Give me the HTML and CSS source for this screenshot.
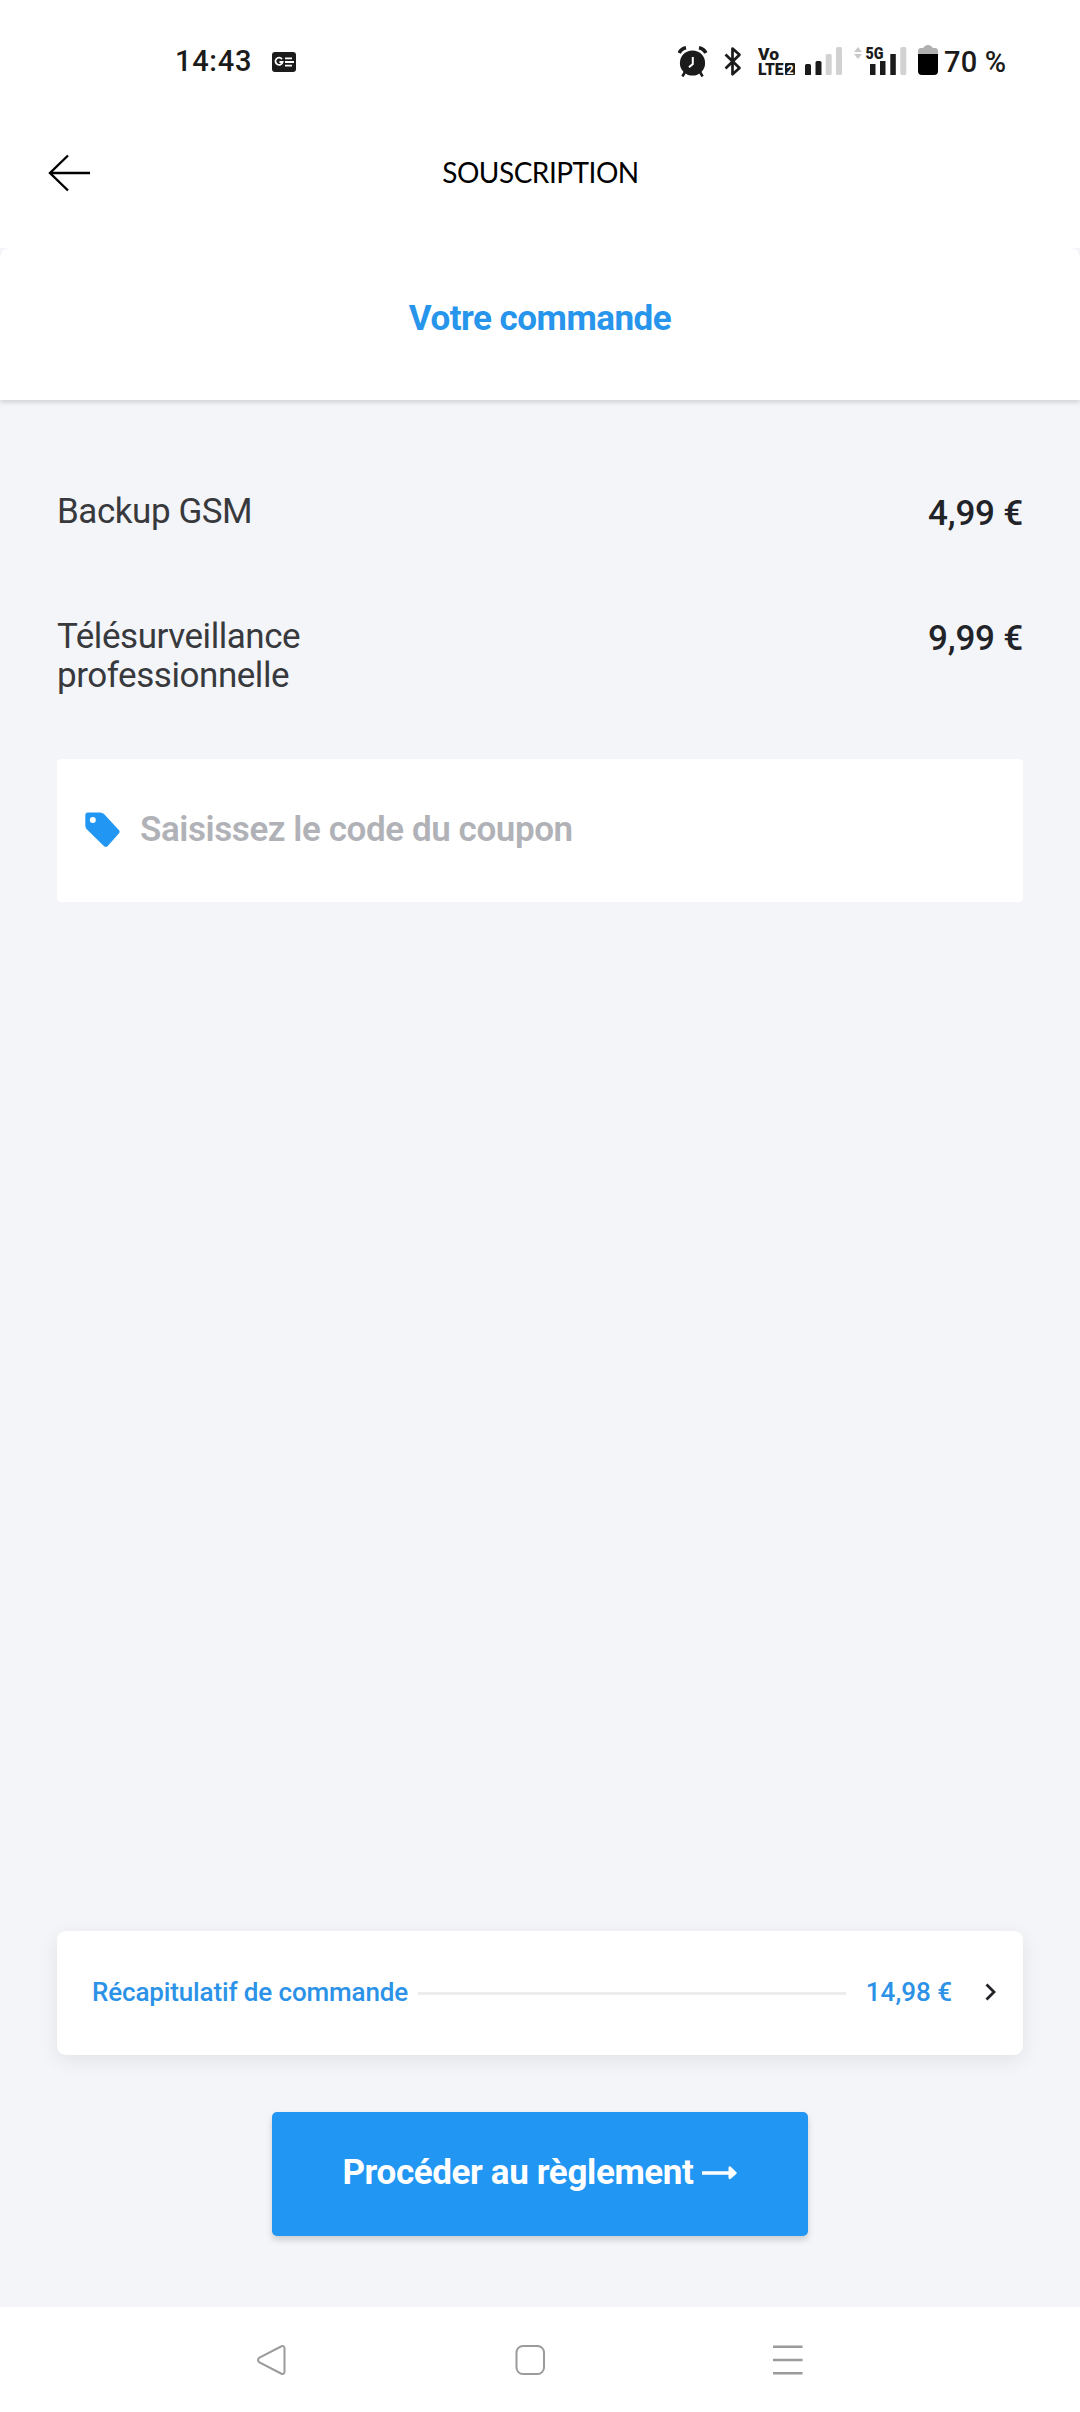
FILE: index.html
```html
<!DOCTYPE html>
<html lang="fr">
<head>
<meta charset="utf-8">
<title>Souscription</title>
<link rel="stylesheet" href="styles.css">
</head>
<body>
<div class="status-bar">
  <span class="clock">14:43</span>
  <svg class="news" width="24" height="20" viewBox="0 0 24 20">
    <rect width="24" height="20" rx="3" fill="#1b1b1b"/>
    <path d="M10 7.2A3.6 3.6 0 1 0 10.6 10H7.4M13 6.3h7M13 10h9M13 13.7h7" fill="none" stroke="#fff" stroke-width="1.8"/>
  </svg>
  <div class="indicators">
    <svg class="alarm" width="30" height="31" viewBox="0 0 30 31">
      <circle cx="14.500" cy="17" r="12.6" fill="#1b1b1b"/>
      <path d="M1.200 7Q3 2.800 8 1.700M27.800 7Q26 2.800 21 1.700" fill="none" stroke="#1b1b1b" stroke-width="3.6"/>
      <path d="M7 26l-2.6 4.5M22 26l2.6 4.5" stroke="#1b1b1b" stroke-width="2.6"/>
      <path d="M14.800 11v7l-3.8 3.3" fill="none" stroke="#fff" stroke-width="2"/>
    </svg>
    <svg class="bluetooth" width="18" height="31" viewBox="0 0 18 31">
      <path d="M1.500 8.500l14 13.500-7 6.200V2.500l7 6.200L1.500 22.500" fill="none" stroke="#1b1b1b" stroke-width="2.700" stroke-linejoin="round"/>
    </svg>
    <svg class="volte" width="38" height="40" viewBox="0 -6 38 40">
      <g class="tiny"><text x="0" y="13.500" font-size="16" textLength="21" lengthAdjust="spacingAndGlyphs">Vo</text>
      <text x="0" y="29" font-size="16" textLength="25.5" lengthAdjust="spacingAndGlyphs">LTE</text></g>
      <rect x="27" y="17" width="10" height="12" rx="1" fill="#1b1b1b"/>
      <text class="sim" x="28.500" y="27.500" font-size="12.500">2</text>
    </svg>
    <svg class="signal" width="38" height="30" viewBox="0 0 38 30">
      <path d="M0 19.5q0-1.5 1.5-1.5h3q1.5 0 1.5 1.5V29H0zM10.500 16.500q0-1.500 1.500-1.500h3q1.500 0 1.500 1.500V29h-6z" fill="#1b1b1b"/>
      <rect x="20.700" y="8" width="6" height="21" rx="1.500" fill="#d2d2d2"/>
      <rect x="31" y="1" width="6" height="28" rx="1.500" fill="#d2d2d2"/>
    </svg>
    <svg class="signal5g" width="54" height="40" viewBox="0 -6 54 40">
      <path d="M0 6l4-5 4 5zM0 8l4 5 4-5z" fill="#c9c9c9"/>
      <text class="tiny" x="11.500" y="12.500" font-size="16.500" textLength="18" lengthAdjust="spacingAndGlyphs">5G</text>
      <path d="M16 18h5.500v11H16zM26 15h5.500v14H26zM36.300 8h5.500v21h-5.500z" fill="#1b1b1b"/>
      <rect x="46.300" y="1" width="6" height="28" rx="1.500" fill="#d2d2d2"/>
    </svg>
    <svg class="battery" width="20" height="31" viewBox="0 0 20 31">
      <path d="M0 10V6q0-3 3-3h2l2-2q1-1 3-1t3 1l2 2h2q3 0 3 3v4z" fill="#b0b0b0"/>
      <path d="M0 9h20v17q0 4-4 4H4q-4 0-4-4z" fill="#000"/>
    </svg>
    <span class="percent">70 %</span>
  </div>
</div>
<header class="app-bar">
  <svg class="back" width="44" height="38" viewBox="0 0 44 38">
    <path d="M20 1.500L2 19l18 17.500M2 19h40" fill="none" stroke="#000" stroke-width="2.400"/>
  </svg>
  <h1 class="title">SOUSCRIPTION</h1>
</header>
<main class="content">
  <section class="panel"><h2 class="panel-title">Votre commande</h2></section>
  <ul class="items">
    <li class="item"><span class="name">Backup GSM</span><span class="price">4,99 €</span></li>
    <li class="item"><span class="name">Télésurveillance professionnelle</span><span class="price">9,99 €</span></li>
  </ul>
  <div class="coupon">
    <svg width="35" height="36" viewBox="0 0 35 36">
      <path d="M3 .5h12q2.200 0 4 1.600l14.800 16q1.600 1.700 0 3.500L22.500 34.300q-1.700 1.500-3.400 0L2 17.500Q.300 15.800.300 13.500V3.500Q.300.500 3 .500z" fill="#2196f3"/>
      <circle cx="7.800" cy="8" r="3" fill="#fff"/>
    </svg>
    <span class="coupon-text">Saisissez le code du coupon</span>
  </div>
  <footer class="bottom">
    <div class="summary">
      <span class="summary-label">Récapitulatif de commande</span>
      <span class="rule"></span>
      <span class="total">14,98 €</span>
      <svg class="chevron" width="12" height="18" viewBox="0 0 12 18"><path d="M1.500 1.500L9 9l-7.500 7.500" fill="none" stroke="#222328" stroke-width="2.800"/></svg>
    </div>
    <div class="pay">
      <span class="pay-label">Procéder au règlement</span>
      <svg width="36" height="14" viewBox="0 0 36 14"><path d="M0 5.200h26.500V2q0-2.500 2.300-1.200L34.200 6q1.200 1 0 2l-5.400 4.700q-2.300 1.300-2.300-1.200V8.800H0z" fill="#fff"/></svg>
    </div>
  </footer>
</main>
<nav class="nav">
  <svg width="30" height="30" viewBox="0 0 30 30"><path d="M2.500 12.600L24 1.500q3.500-1.500 3.500 2v23q0 3.500-3.500 2L2.500 17.400q-3-2.400 0-4.800z" fill="none" stroke="#9b9b9b" stroke-width="2"/></svg>
  <svg width="30" height="30" viewBox="0 0 30 30"><rect x="1.500" y="1" width="27.500" height="28" rx="6.500" fill="none" stroke="#9b9b9b" stroke-width="2"/></svg>
  <svg width="30" height="30" viewBox="0 0 30 30"><path d="M0 1.700h29.500M0 15h29.500M0 28.300h29.500" stroke="#9b9b9b" stroke-width="2.500"/></svg>
</nav>
</body>
</html>
```
FILE: styles.css
```css
* { box-sizing: border-box; }
body { margin: 0; width: 1080px; height: 2412px; display: flex; flex-direction: column; background: #fff; font-family: Roboto, sans-serif; overflow: hidden; }
svg { display: block; flex: none; }
h1, h2, ul { margin: 0; padding: 0; list-style: none; }
.status-bar { height: 124px; padding: 46px 0 0 175px; display: flex; align-items: flex-start; flex: none; }
.clock { width: 97px; font-size: 29px; line-height: 31px; font-weight: 500; letter-spacing: .7px; color: #1b1b1b; white-space: nowrap; }
.news { margin-top: 6px; }
.indicators { margin-left: 382px; display: flex; align-items: flex-start; }
.bluetooth { margin-left: 16px; }
.volte { margin: -6px 0 0 16px; }
.signal { margin-left: 9px; }
.signal5g { margin: -6px 0 0 11px; }
.battery { margin: -1px 0 0 10px; }
.percent { margin-left: 6px; font-size: 29px; line-height: 32px; font-weight: 500; letter-spacing: .2px; color: #1b1b1b; white-space: nowrap; }
.tiny { font-weight: 900; fill: #1b1b1b; }
.sim { font-weight: 700; fill: #fff; }
.app-bar { height: 124px; padding: 0 47px; display: grid; grid-template-columns: 44px 1fr 44px; align-items: start; flex: none; }
.back { margin: 30px 0 0 1px; }
.title { margin-top: 31px; padding-left: 1px; font: 400 28px/34px Lato, sans-serif; letter-spacing: -.5px; text-align: center; color: #000; }
.content { flex: 1; display: flex; flex-direction: column; background: #f3f5f9; }
.panel { height: 152px; border-radius: 9px 9px 0 0; background: #fff; box-shadow: 0 3px 4px rgba(0,0,0,.12); display: flex; justify-content: center; padding-top: 51px; }
.panel-title { font-size: 35px; line-height: 40px; font-weight: 700; letter-spacing: -.5px; color: #2795ec; }
.items { padding: 92px 57px 0; }
.item { display: flex; justify-content: space-between; align-items: flex-start; height: 125px; color: #38393d; font-size: 35px; line-height: 39px; letter-spacing: -.45px; }
.name { width: 300px; }
.price { padding-top: 2px; font-weight: 500; letter-spacing: -.2px; color: #222328; white-space: nowrap; }
.coupon { margin: 17px 57px 0; height: 143px; border-radius: 4px; background: #fff; padding: 0 0 2px 28px; display: flex; align-items: center; gap: 20px; }
.coupon-text { font-size: 35px; line-height: 40px; font-weight: 600; letter-spacing: -.42px; color: #b0b2b7; }
.bottom { margin-top: auto; padding: 0 57px 71px; display: flex; flex-direction: column; align-items: center; gap: 57px; }
.summary { width: 966px; height: 124px; border-radius: 9px; background: #fff; box-shadow: 0 5px 20px rgba(0,0,0,.08); display: flex; align-items: center; padding: 0 26px 2px 35px; font-size: 26px; line-height: 32px; font-weight: 500; color: #2b92e7; white-space: nowrap; }
.summary-label { letter-spacing: -.14px; }
.rule { flex: 1; height: 3px; margin: 3px 20px 0 10px; background: #ededee; }
.chevron { margin-left: 33px; }
.pay { width: 536px; height: 124px; border-radius: 5px; background: #2196f3; box-shadow: 0 4px 6px rgba(0,0,0,.16); color: #fff; display: flex; align-items: center; justify-content: center; gap: 8px; padding-bottom: 2px; }
.pay-label { font-size: 35px; line-height: 40px; font-weight: 700; letter-spacing: -.38px; white-space: nowrap; }
.nav { height: 105px; flex: none; padding: 38px 277px 0 257px; display: flex; justify-content: space-between; }
```
